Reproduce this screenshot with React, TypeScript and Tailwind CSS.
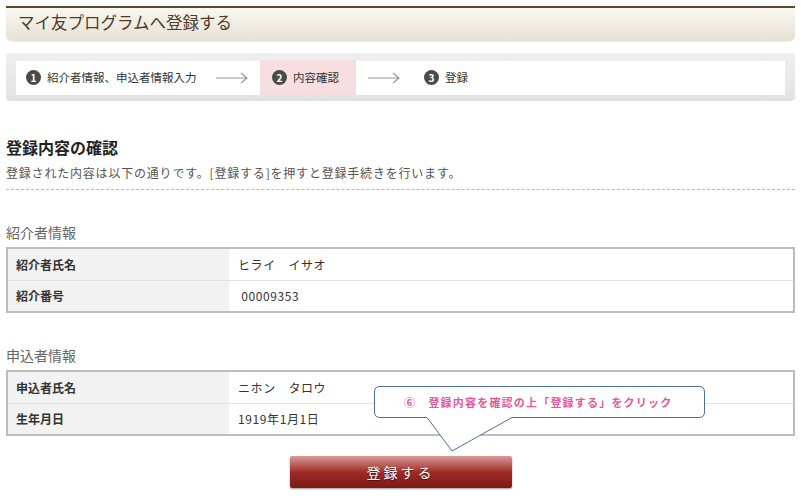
const jp = "font-['Noto_Sans_CJK_JP','Noto_Sans',sans-serif]";

const StepNum = ({ n }: { n: number }) => (
  <span className="flex h-[15px] w-[15px] items-center justify-center rounded-full bg-[#4a4a4a] text-[10px] font-bold leading-none text-white">
    {n}
  </span>
);

const Arrow = () => (
  <svg width="32" height="12" viewBox="0 0 32 12" className="shrink-0">
    <path d="M0 6 H31 M25 1 L31 6 L25 11" fill="none" stroke="#9a9a9a" strokeWidth="1.2" />
  </svg>
);

const rows1 = [
  { label: "紹介者氏名", value: "ヒライ　イサオ" },
  { label: "紹介番号", value: " 00009353" },
];

const rows2 = [
  { label: "申込者氏名", value: "ニホン　タロウ" },
  { label: "生年月日", value: "1919年1月1日" },
];

const InfoTable = ({ rows }: { rows: { label: string; value: string }[] }) => (
  <div className="border-2 border-[#bcbcbc]">
    {rows.map((r, i) => (
      <div key={r.label} className={`flex h-[31px] ${i > 0 ? "border-t border-[#e2e2e2]" : ""}`}>
        <div className="flex w-[221px] items-center bg-[#f2f2f2] pl-[8px] text-[12px] font-bold text-[#333]">{r.label}</div>
        <div className="flex items-center whitespace-pre pl-[9px] text-[12px] tracking-[0.6px] text-[#333]">{r.value}</div>
      </div>
    ))}
  </div>
);

export default function App() {
  return (
    <div className={`relative h-[501px] w-[801px] overflow-hidden bg-white px-[6px] pt-[6px] ${jp}`}>
      {/* page header */}
      <div className="h-[35px] rounded-b-[6px] border-t-2 border-[#5c4a30] bg-gradient-to-b from-[#faf7f0] to-[#e7e1d4] pl-[12px] shadow-[0_1px_1px_rgba(0,0,0,0.08)]">
        <h1 className="pt-[5px] font-['Liberation_Serif','Noto_Sans_CJK_JP',serif] text-[16.5px] leading-[22px] text-[#4d3c29]">
          マイ友プログラムへ登録する
        </h1>
      </div>

      {/* steps */}
      <div className="mt-[12px] rounded-[4px] bg-gradient-to-b from-[#efefef] to-[#e2e2e2] px-[10px] pt-[7px] pb-[6px]">
        <div className="flex h-[35px] items-center bg-white text-[11.5px] text-[#333] shadow-[inset_0_1px_1px_rgba(0,0,0,0.06)]">
          <div className="flex w-[200px] items-center gap-[6px] pl-[10px]">
            <StepNum n={1} />
            <span>紹介者情報、申込者情報入力</span>
          </div>
          <Arrow />
          <div className="ml-[12px] flex h-full w-[96px] items-center gap-[6px] bg-[#f7dfe1] pl-[12px]">
            <StepNum n={2} />
            <span>内容確認</span>
          </div>
          <div className="ml-[12px]">
            <Arrow />
          </div>
          <div className="ml-[24px] flex items-center gap-[6px]">
            <StepNum n={3} />
            <span>登録</span>
          </div>
        </div>
      </div>

      {/* confirm heading */}
      <h2 className="mt-[36px] text-[16px] font-bold leading-[20px] text-[#222]">登録内容の確認</h2>
      <p className="mt-[7px] text-[12px] leading-[18px] tracking-[0.8px] text-[#555]">
        登録された内容は以下の通りです。[登録する]を押すと登録手続きを行います。
      </p>
      <div className="mt-[7px] border-t border-dashed border-[#b8b8b8]" />

      <h3 className="mt-[33px] text-[14px] leading-[18px] text-[#666]">紹介者情報</h3>
      <div className="mt-[6px]">
        <InfoTable rows={rows1} />
      </div>

      <h3 className="mt-[33px] text-[14px] leading-[18px] text-[#666]">申込者情報</h3>
      <div className="mt-[6px]">
        <InfoTable rows={rows2} />
      </div>

      <div className="mt-[20px] flex justify-center">
        <button className="h-[32px] w-[222px] rounded-[2px] bg-gradient-to-b from-[#d89a9a] via-[#9e2a26] to-[#7e1a16] text-[14px] tracking-[3px] text-white shadow-[0_1px_2px_rgba(0,0,0,0.4)] [text-shadow:0_1px_1px_rgba(0,0,0,0.5)]">
          登録する
        </button>
      </div>

      {/* callout */}
      <div className="absolute left-[374px] top-[386px] h-[67px] w-[332px]">
        <svg width="332" height="67" viewBox="0 0 332 67" className="absolute inset-0">
          <path
            d="M6 0.5 H325 Q330.5 0.5 330.5 6 V26 Q330.5 31.5 325 31.5 H138 L78 65 L53 31.5 H6 Q0.5 31.5 0.5 26 V6 Q0.5 0.5 6 0.5 Z"
            fill="#fff"
            stroke="#4c6fa8"
            strokeWidth="1"
          />
        </svg>
        <div className="relative flex h-[32px] items-center pl-[30px] text-[11px] font-bold tracking-[1.2px] text-[#e8579a]">
          ⑥　登録内容を確認の上「登録する」をクリック
        </div>
      </div>
    </div>
  );
}
